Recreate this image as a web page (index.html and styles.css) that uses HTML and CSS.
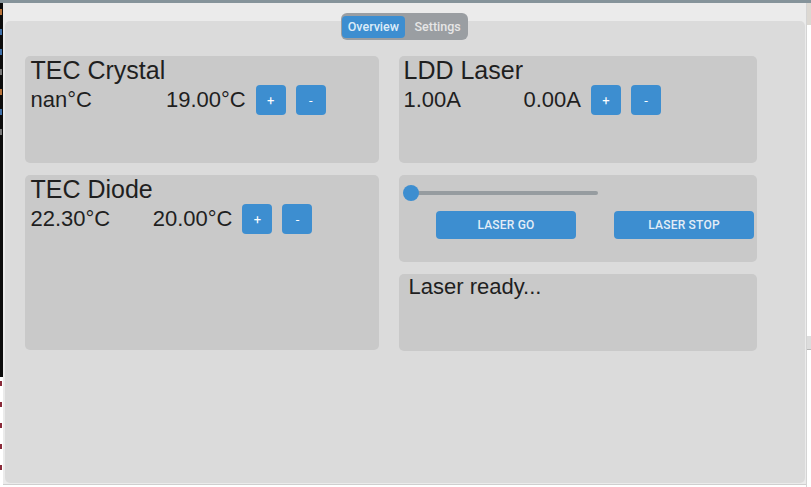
FILE: index.html
```html
<!DOCTYPE html>
<html>
<head>
<meta charset="utf-8">
<title>Laser control</title>
<link rel="stylesheet" href="styles.css">
</head>
<body>
<div class="screen">
  <div class="topbar"></div>
  <div class="desk">
    <div class="strip">
      <div class="strip-dark">
        <span class="frag frag-o"></span>
        <span class="frag frag-b"></span>
        <span class="frag frag-b"></span>
        <span class="frag frag-w"></span>
        <span class="frag frag-o"></span>
        <span class="frag frag-b"></span>
        <span class="frag frag-w"></span>
      </div>
      <div class="strip-light">
        <span class="frag frag-r"></span>
        <span class="frag frag-r"></span>
        <span class="frag frag-r"></span>
        <span class="frag frag-r"></span>
        <span class="frag frag-r"></span>
      </div>
    </div>
    <div class="window">
      <div class="tabs-row">
        <div class="tabs">
          <span class="tab tab-active">Overview</span>
          <span class="tab">Settings</span>
        </div>
      </div>
      <div class="panel">
        <div class="col col-left">
          <div class="card card-crystal">
            <div class="card-title">TEC Crystal</div>
            <div class="row">
              <span class="val v1 v1-crystal">nan°C</span>
              <span class="val">19.00°C</span>
              <div class="btns">
                <button class="btn-sq">+</button>
                <button class="btn-sq">-</button>
              </div>
            </div>
          </div>
          <div class="card card-diode">
            <div class="card-title">TEC Diode</div>
            <div class="row">
              <span class="val v1 v1-diode">22.30°C</span>
              <span class="val">20.00°C</span>
              <div class="btns">
                <button class="btn-sq">+</button>
                <button class="btn-sq">-</button>
              </div>
            </div>
          </div>
        </div>
        <div class="col col-right">
          <div class="card card-ldd">
            <div class="card-title">LDD Laser</div>
            <div class="row">
              <span class="val v1 v1-ldd">1.00A</span>
              <span class="val">0.00A</span>
              <div class="btns">
                <button class="btn-sq">+</button>
                <button class="btn-sq">-</button>
              </div>
            </div>
          </div>
          <div class="card card-slider">
            <div class="slider">
              <div class="track"></div>
              <div class="thumb"></div>
            </div>
            <div class="laser-btns">
              <button class="btn-wide">LASER GO</button>
              <button class="btn-wide">LASER STOP</button>
            </div>
          </div>
          <div class="card card-status">
            <div class="status-text">Laser ready...</div>
          </div>
        </div>
      </div>
    </div>
    <div class="rstrip">
      <div class="rstrip-top"></div>
      <div class="rstrip-block"></div>
    </div>
  </div>
</div>
</body>
</html>
```
FILE: styles.css
```css
* { box-sizing: border-box; }
html, body {
  margin: 0;
  padding: 0;
  background: #ffffff;
  width: 811px;
  height: 487px;
  overflow: hidden;
}
body {
  font-family: "Liberation Sans", Arial, sans-serif;
  color: #1f1f1f;
}
.screen {
  width: 811px;
  height: 487px;
  display: flex;
  flex-direction: column;
}
.topbar {
  height: 3px;
  background: #85939a;
  flex: none;
}
.desk {
  flex: 1;
  display: flex;
  flex-direction: row;
  align-items: flex-start;
}
.strip {
  width: 3px;
  flex: none;
  display: flex;
  flex-direction: column;
}
.strip-dark {
  height: 374px;
  background: #0c0c0c;
  display: flex;
  flex-direction: column;
  gap: 14px;
  padding-top: 6px;
}
.strip-light {
  height: 110px;
  background: #ffffff;
  display: flex;
  flex-direction: column;
  gap: 16px;
  padding-top: 4px;
}
.frag {
  display: block;
  width: 2px;
  height: 6px;
}
.frag-o { background: #b8733a; }
.frag-b { background: #3f6fa8; }
.frag-w { background: #777777; }
.frag-r { background: #8a2a3a; height: 5px; }

.window {
  width: 803px;
  height: 482px;
  flex: none;
  background: #ebebeb;
  display: flex;
  flex-direction: column;
  border-bottom: 1px solid #cfcfcf;
}
.tabs-row {
  display: flex;
  justify-content: center;
  padding-top: 10px;
  margin-bottom: -19px;
  position: relative;
  z-index: 2;
}
.tabs {
  display: flex;
  gap: 4px;
  background: #9a9ea2;
  border-radius: 6px;
  padding: 3px 1.5px;
  height: 27px;
  font-family: Roboto, "Liberation Sans", sans-serif;
  font-size: 12.5px;
  font-weight: 500;
}
.tab {
  height: 21.5px;
  line-height: 21.5px;
  padding: 0 6px;
  color: #e6e6e6;
}
.tab-active {
  background: #3d8ed0;
  border-radius: 4px;
  padding: 0 5.5px;
  color: #dcecf8;
}

.panel {
  margin: 0 1px 1px 2px;
  height: 462px;
  background: #dbdbdb;
  border-radius: 5px;
  padding: 35px 0 0 20px;
  display: flex;
  gap: 20px;
  align-items: flex-start;
}
.col {
  display: flex;
  flex-direction: column;
  gap: 12px;
}
.col-left { width: 354px; }
.col-right { width: 358px; }
.card {
  background: #c9c9c9;
  border-radius: 5px;
  padding: 0 5px 0 5.5px;
}
.card-crystal { height: 107px; }
.card-diode { height: 175px; }
.card-ldd { height: 107px; padding-left: 4.5px; }
.card-slider { height: 87px; padding: 10px 0 0 5px; }
.card-status { height: 77px; padding: 0 9px 0 9.5px; }

.card-title {
  font-size: 25px;
  line-height: 29px;
  height: 29px;
}
.row {
  display: flex;
  align-items: center;
  height: 30px;
}
.val {
  font-size: 22px;
  white-space: nowrap;
}
.v1 { display: inline-block; }
.v1-crystal { width: 135.5px; }
.v1-diode { width: 122.2px; }
.v1-ldd { width: 120px; }
.btns {
  display: flex;
  gap: 10px;
  margin-left: 10px;
}
.btn-sq {
  width: 30px;
  height: 30px;
  border: none;
  border-radius: 4px;
  background: #3d8ed0;
  color: #ffffff;
  font-family: Roboto, "Liberation Sans", sans-serif;
  font-size: 13px;
  font-weight: 400;
  padding: 0;
  display: flex;
  align-items: center;
  justify-content: center;
}

.slider {
  position: relative;
  width: 194px;
  height: 16px;
  display: flex;
  align-items: center;
}
.track {
  width: 100%;
  height: 4px;
  border-radius: 2px;
  background: #969ca0;
}
.thumb {
  position: absolute;
  left: -1px;
  top: 0;
  width: 16px;
  height: 16px;
  border-radius: 50%;
  background: #3d8ed0;
}
.laser-btns {
  display: flex;
  gap: 38px;
  margin-top: 10px;
  padding-left: 32px;
}
.btn-wide {
  width: 140px;
  height: 28px;
  border: none;
  border-radius: 4px;
  background: #3d8ed0;
  color: #e3edf7;
  font-family: Roboto, "Liberation Sans", sans-serif;
  font-size: 12px;
  font-weight: 500;
  letter-spacing: 0.2px;
  padding: 0;
}
.status-text {
  font-size: 22px;
  line-height: 25px;
}

.rstrip {
  width: 5px;
  height: 484px;
  flex: none;
  background: #ffffff;
  border-left: 1px solid #d4d4d4;
  display: flex;
  flex-direction: column;
}
.rstrip-top {
  height: 22px;
  background: #dcd8d2;
}
.rstrip-block {
  margin-top: 311px;
  height: 14px;
  background: #dddddd;
  border-bottom: 1px solid #b8b8b8;
}
```
